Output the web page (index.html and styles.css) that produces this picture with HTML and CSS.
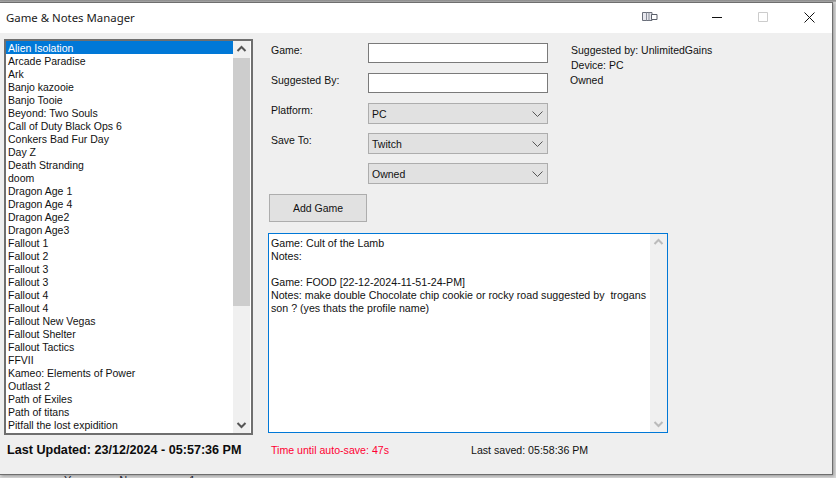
FILE: index.html
```html
<!DOCTYPE html>
<html lang="en">
<head>
<meta charset="utf-8">
<title>Game &amp; Notes Manager</title>
<link rel="stylesheet" href="styles.css">
</head>
<body>
<div class="desktop">
  <div class="window">
    <header class="titlebar">
      <span class="title">Game &amp; Notes Manager</span>
      <div class="controls">
        <svg class="ctl-snip" width="16" height="11" viewBox="0 0 16 11"><path d="M.5 1.5h9.500v8h-9.500z" fill="#e8e8ee" stroke="#6a6f7a"/><path d="M4.500 1.500v8M7 1.500v8" stroke="#8a8f9a"/><path d="M9.500 3.500h5.500v5h-5.500z" fill="#fff" stroke="#5a5f6a"/></svg>
        <svg class="ctl-min" width="11" height="11" viewBox="0 0 11 11"><path d="M0 5.500h10" stroke="#111"/></svg>
        <svg class="ctl-max" width="11" height="11" viewBox="0 0 11 11"><path d="M.5 .5h9v9h-9z" fill="none" stroke="#ccc"/></svg>
        <svg class="ctl-close" width="11" height="11" viewBox="0 0 11 11"><path d="M.5 .5l10 10M10.500 .5l-10 10" stroke="#111"/></svg>
      </div>
    </header>
    <main class="content">
      <section class="left">
        <div class="listbox">
          <ul class="items">
            <li class="selected">Alien Isolation</li>
            <li>Arcade Paradise</li>
            <li>Ark</li>
            <li>Banjo kazooie</li>
            <li>Banjo Tooie</li>
            <li>Beyond: Two Souls</li>
            <li>Call of Duty Black Ops 6</li>
            <li>Conkers Bad Fur Day</li>
            <li>Day Z</li>
            <li>Death Stranding</li>
            <li>doom</li>
            <li>Dragon Age 1</li>
            <li>Dragon Age 4</li>
            <li>Dragon Age2</li>
            <li>Dragon Age3</li>
            <li>Fallout 1</li>
            <li>Fallout 2</li>
            <li>Fallout 3</li>
            <li>Fallout 3</li>
            <li>Fallout 4</li>
            <li>Fallout 4</li>
            <li>Fallout New Vegas</li>
            <li>Fallout Shelter</li>
            <li>Fallout Tactics</li>
            <li>FFVII</li>
            <li>Kameo: Elements of Power</li>
            <li>Outlast 2</li>
            <li>Path of Exiles</li>
            <li>Path of titans</li>
            <li>Pitfall the lost expidition</li>
          </ul>
          <div class="vscroll">
            <svg class="arrow" width="17" height="17" viewBox="0 0 17 17"><path d="M4.500 10l4-4 4 4" fill="none" stroke="#555" stroke-width="2"/></svg>
            <div class="track"><div class="thumb"></div></div>
            <svg class="arrow" width="17" height="17" viewBox="0 0 17 17"><path d="M4.500 7l4 4 4-4" fill="none" stroke="#555" stroke-width="2"/></svg>
          </div>
        </div>
        <p class="updated">Last Updated: 23/12/2024 - 05:57:36 PM</p>
      </section>
      <section class="right">
        <div class="form">
          <div class="fields">
            <label class="lbl">Game:</label>
            <div class="textbox"></div>
            <label class="lbl">Suggested By:</label>
            <div class="textbox"></div>
            <label class="lbl">Platform:</label>
            <div class="combo"><span>PC</span><svg width="11" height="6" viewBox="0 0 11 6"><path d="M.5 .5l5 5 5-5" fill="none" stroke="#555"/></svg></div>
            <label class="lbl">Save To:</label>
            <div class="combo"><span>Twitch</span><svg width="11" height="6" viewBox="0 0 11 6"><path d="M.5 .5l5 5 5-5" fill="none" stroke="#555"/></svg></div>
            <span class="lbl"></span>
            <div class="combo"><span class="owned">Owned</span><svg width="11" height="6" viewBox="0 0 11 6"><path d="M.5 .5l5 5 5-5" fill="none" stroke="#555"/></svg></div>
          </div>
          <div class="info">
            <p>Suggested by: UnlimitedGains</p>
            <p>Device: PC</p>
            <p class="info-owned">Owned</p>
          </div>
        </div>
        <button class="add" type="button">Add Game</button>
        <div class="notes">
          <div class="notes-text">
            <p>Game: Cult of the Lamb</p>
            <p>Notes:</p>
            <p>&nbsp;</p>
            <p>Game: FOOD [22-12-2024-11-51-24-PM]</p>
            <p>Notes: make double Chocolate chip cookie or rocky road suggested by&nbsp; trogans<br>son ? (yes thats the profile name)</p>
          </div>
          <div class="vscroll vscroll-off">
            <svg class="arrow" width="17" height="17" viewBox="0 0 17 17"><path d="M4.500 10l4-4 4 4" fill="none" stroke="#bbb" stroke-width="2"/></svg>
            <div class="track"></div>
            <svg class="arrow" width="17" height="17" viewBox="0 0 17 17"><path d="M4.500 7l4 4 4-4" fill="none" stroke="#bbb" stroke-width="2"/></svg>
          </div>
        </div>
        <div class="status">
          <span class="autosave">Time until auto-save: 47s</span>
          <span class="saved">Last saved: 05:58:36 PM</span>
        </div>
      </section>
    </main>
  </div>
  <div class="behind"><span>Y</span><span>N</span><span>1</span></div>
</div>
</body>
</html>
```

FILE: styles.css
```css
html, body {
  margin: 0;
  padding: 0;
}
body {
  width: 836px;
  height: 478px;
  overflow: hidden;
  background: #dcdcdc;
  font-family: "Liberation Sans", Arial, sans-serif;
  font-size: 10.5px;
  color: #111;
}
p { margin: 0; }
.desktop {
  padding-top: 2px;
  background: linear-gradient(#8a8a8a 0, #b4b4b4 2px, #d8d8d8 2px);
  height: 476px;
}
.window {
  width: 832px;
  height: 471px;
  background: #efefef;
  border: 1px solid #6e6e6e;
  border-left: 0;
  box-shadow: 1px 1px 3px rgba(0,0,0,.3);
}
.titlebar {
  height: 30px;
  box-sizing: border-box;
  padding-bottom: 2px;
  background: #fff;
  display: flex;
  align-items: center;
  justify-content: space-between;
}
.title {
  font-family: "Noto Sans", "Open Sans", sans-serif;
  font-size: 11.4px;
  margin-left: 6px;
  color: #1a1a1a;
}
.controls {
  display: flex;
  align-items: center;
  height: 100%;
}
.controls svg { display: block; }
.ctl-snip { margin-right: 54px; margin-top: -1px; }
.ctl-min { margin-right: 35px; }
.ctl-max { margin-right: 35px; }
.ctl-close { margin-right: 17px; }
.content {
  display: flex;
  padding: 6px 0 0 4px;
}
.left {
  width: 249px;
  flex: none;
}
.listbox {
  height: 396px;
  box-sizing: border-box;
  border: 2px solid #6f6f6f;
  background: #fff;
  display: flex;
  overflow: hidden;
}
.items {
  list-style: none;
  margin: 0;
  padding: 0;
  flex: 1;
  min-width: 0;
  overflow: hidden;
}
.items li {
  height: 13px;
  line-height: 15px;
  padding-left: 2px;
  white-space: nowrap;
}
.items li.selected {
  background: #0078d7;
  color: #fff;
}
.vscroll {
  width: 17px;
  flex: none;
  background: #f0f0f0;
  display: flex;
  flex-direction: column;
  margin-right: 1px;
}
.arrow { display: block; flex: none; }
.track {
  flex: 1;
  min-height: 0;
}
.thumb {
  height: 248px;
  background: #cdcdcd;
}
.updated {
  margin: 8px 0 0 3px;
  font-weight: 700;
  font-size: 12.6px;
  line-height: 14px;
  white-space: nowrap;
  color: #0c0c0c;
}
.right {
  margin-left: 15px;
  width: 400px;
  flex: none;
}
.form {
  display: flex;
}
.fields {
  display: grid;
  grid-template-columns: 100px 180px;
  row-gap: 9px;
  padding-top: 4px;
}
.lbl {
  padding-left: 3px;
  line-height: 14px;
}
.textbox {
  height: 20px;
  box-sizing: border-box;
  border: 1px solid #7a7a7a;
  background: #fff;
  margin-bottom: 1px;
}
.combo {
  height: 21px;
  box-sizing: border-box;
  border: 1px solid #adadad;
  background: #e1e1e1;
  display: flex;
  align-items: center;
  justify-content: space-between;
  padding: 0 4px 0 3px;
}
.info {
  margin-left: 23px;
  padding-top: 4px;
  line-height: 15px;
  white-space: nowrap;
}
.info-owned { margin-left: -1px; }
.add {
  display: block;
  width: 98px;
  height: 28px;
  margin: 10px 0 0 1px;
  padding: 0;
  border: 1px solid #adadad;
  background: #e1e1e1;
  font: inherit;
  color: #111;
}
.notes {
  margin-top: 11px;
  height: 200px;
  box-sizing: border-box;
  border: 1px solid #0078d7;
  background: #fff;
  display: flex;
}
.notes-text {
  flex: 1;
  min-width: 0;
  padding: 3px 0 0 2px;
  font-size: 10.67px;
  line-height: 13px;
  white-space: nowrap;
}
.vscroll-off {
  margin-right: 0;
}
.status {
  display: flex;
  margin-top: 10px;
  font-size: 10.6px;
  line-height: 14px;
}
.autosave {
  color: #ff0033;
  margin-left: 3px;
  width: 200px;
}
.behind {
  display: flex;
  height: 3px;
  overflow: hidden;
  font-size: 11px;
  line-height: 11px;
  color: #223;
}
.behind span:nth-child(1) { margin-left: 64px; }
.behind span:nth-child(2) { margin-left: 48px; }
.behind span:nth-child(3) { margin-left: 62px; }
```
